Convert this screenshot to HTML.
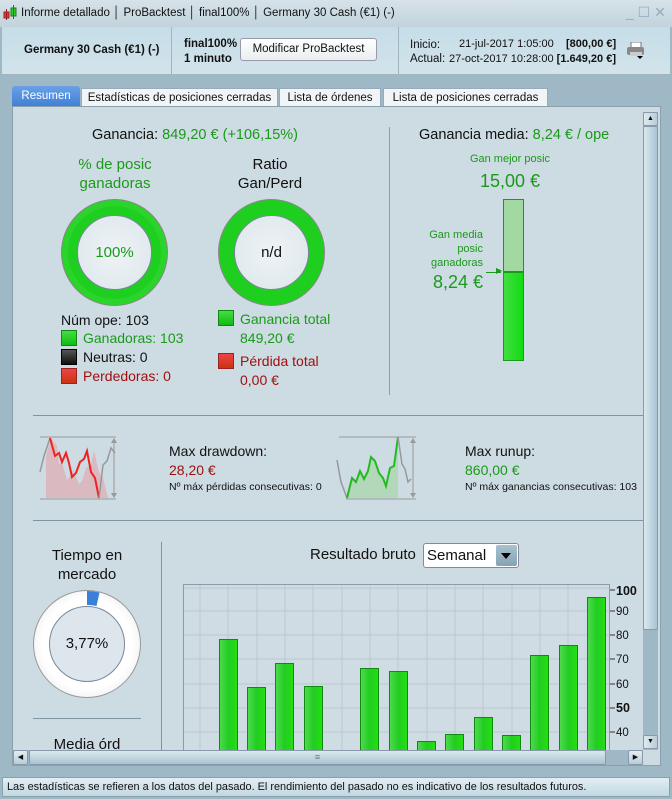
<!DOCTYPE html>
<html><head><meta charset="utf-8"><style>
*{margin:0;padding:0;box-sizing:border-box}
body{width:672px;height:799px;overflow:hidden;background:#9fb8c5;font-family:"Liberation Sans",Arial,sans-serif;position:relative;font-size:12px;color:#111}
.a{position:absolute;white-space:nowrap}
.g{color:#1a9a1a}.r{color:#a01010}
.c{text-align:center}
</style></head><body>
<div class="a" style="left:0;top:0;width:672px;height:27px;background:linear-gradient(#d6e2e8,#c2d3dc)"></div>
<svg class="a" style="left:3px;top:5px" width="14" height="16"><rect x="1" y="7" width="5" height="6" fill="#e33" stroke="#922"/><line x1="3.5" y1="4" x2="3.5" y2="15" stroke="#922"/><rect x="8" y="3" width="5" height="8" fill="#3c3" stroke="#272"/><line x1="10.5" y1="0" x2="10.5" y2="14" stroke="#272"/></svg>
<div class="a" style="left:21px;top:7px;font-size:11.5px">Informe detallado │ ProBacktest │ final100% │ Germany 30 Cash (€1) (-)</div>
<div class="a" style="left:626px;top:4px;font-size:14px;color:#9ab">_ ☐ ✕</div>
<div class="a" style="left:2px;top:27px;width:668px;height:48px;background:linear-gradient(#c5dde8,#d3e3ea);border-bottom:1px solid #9fb5c0"></div>
<div class="a" style="left:171px;top:27px;width:1px;height:48px;background:#9fb5c0"></div>
<div class="a" style="left:398px;top:27px;width:1px;height:48px;background:#9fb5c0"></div>
<div class="a" style="left:24px;top:44px;font-size:11.5px;font-weight:bold">Germany 30 Cash (€1) (-)</div>
<div class="a" style="left:184px;top:37px;font-size:11.5px;font-weight:bold;line-height:15px">final100%<br>1 minuto</div>
<div class="a c" style="left:240px;top:38px;width:137px;height:23px;border:1px solid #99a;border-radius:3px;background:linear-gradient(#fff,#eaeef0);font-size:11.5px;line-height:21px">Modificar ProBacktest</div>
<div class="a" style="left:410px;top:38px;font-size:11.5px;line-height:15px">Inicio:</div>
<div class="a" style="left:410px;top:53px;font-size:11.5px">Actual:</div>
<div class="a" style="left:459px;top:38px;font-size:11px">21-jul-2017 1:05:00</div>
<div class="a" style="left:449px;top:53px;font-size:11px">27-oct-2017 10:28:00</div>
<div class="a" style="left:566px;top:38px;width:50px;text-align:right;font-size:11px;font-weight:bold">[800,00 €]</div>
<div class="a" style="left:556px;top:53px;width:60px;text-align:right;font-size:11px;font-weight:bold">[1.649,20 €]</div>
<svg class="a" style="left:626px;top:42px" width="20" height="18"><rect x="5" y="0" width="10" height="6" fill="#fff" stroke="#777"/><rect x="1" y="5" width="17" height="8" rx="2" fill="#888"/><rect x="4" y="10" width="12" height="4" fill="#ccc"/><path d="M11 14h6l-3 3z" fill="#000"/></svg>
<div class="a c" style="left:12px;top:86px;width:68px;height:21px;background:linear-gradient(#6aa1e6,#3e7fd6);color:#fff;border-radius:3px 3px 0 0;font-size:11.5px;line-height:21px">Resumen</div>
<div class="a c" style="left:81px;top:88px;width:197px;height:19px;background:#f2f5f7;border:1px solid #9ab;font-size:11.5px;line-height:18px">Estadísticas de posiciones cerradas</div>
<div class="a c" style="left:279px;top:88px;width:102px;height:19px;background:#f2f5f7;border:1px solid #9ab;font-size:11.5px;line-height:18px">Lista de órdenes</div>
<div class="a c" style="left:383px;top:88px;width:165px;height:19px;background:#f2f5f7;border:1px solid #9ab;font-size:11.5px;line-height:18px">Lista de posiciones cerradas</div>
<div class="a" style="left:12px;top:106px;width:649px;height:660px;background:#cddbe2;border:1px solid #8aa0ac"></div>
<div class="a c" style="left:60px;top:127px;width:270px;font-size:14.5px">Ganancia: <span class="g">849,20 € (+106,15%)</span></div>
<div class="a c g" style="left:50px;top:155px;width:130px;font-size:15px;line-height:19px">% de posic<br>ganadoras</div>
<div class="a c" style="left:205px;top:155px;width:130px;font-size:15px;line-height:19px">Ratio<br>Gan/Perd</div>
<div class="a" style="left:61px;top:199px;width:107px;height:107px;border-radius:50%;background:#1fcf1f;border:1px solid #888;box-shadow:inset 0 0 0 6px #2bd42b"></div>
<div class="a c g" style="left:77px;top:215px;width:75px;height:75px;border-radius:50%;background:radial-gradient(#eef3f6,#dce6ec);border:1px solid #789;line-height:73px;font-size:15px">100%</div>
<div class="a" style="left:218px;top:199px;width:107px;height:107px;border-radius:50%;background:#1fcf1f;border:1px solid #888"></div>
<div class="a c" style="left:234px;top:215px;width:75px;height:75px;border-radius:50%;background:radial-gradient(#eef3f6,#dce6ec);border:1px solid #789;line-height:73px;font-size:15px">n/d</div>
<div class="a" style="left:61px;top:311px;font-size:14px;line-height:19px">Núm ope: 103</div>
<div class="a" style="left:61px;top:330px;width:16px;height:16px;background:linear-gradient(#4d4,#1b1);border:1px solid #181"></div>
<div class="a g" style="left:83px;top:330px;font-size:14px">Ganadoras: 103</div>
<div class="a" style="left:61px;top:349px;width:16px;height:16px;background:linear-gradient(#555,#111);border:1px solid #000"></div>
<div class="a" style="left:83px;top:349px;font-size:14px">Neutras: 0</div>
<div class="a" style="left:61px;top:368px;width:16px;height:16px;background:linear-gradient(#e44,#c31);border:1px solid #922"></div>
<div class="a r" style="left:83px;top:368px;font-size:14px">Perdedoras: 0</div>
<div class="a" style="left:218px;top:310px;width:16px;height:16px;background:linear-gradient(#4d4,#1b1);border:1px solid #181"></div>
<div class="a g" style="left:240px;top:310px;font-size:14px;line-height:19px">Ganancia total<br>849,20 €</div>
<div class="a" style="left:218px;top:353px;width:16px;height:16px;background:linear-gradient(#e44,#c31);border:1px solid #922"></div>
<div class="a r" style="left:240px;top:352px;font-size:14px;line-height:19px">Pérdida total<br>0,00 €</div>
<div class="a" style="left:389px;top:127px;width:1px;height:268px;background:#8aa0ac"></div>
<div class="a" style="left:419px;top:127px;font-size:14.5px">Ganancia media: <span class="g">8,24 € / ope</span></div>
<div class="a c g" style="left:450px;top:153px;width:120px;font-size:11px">Gan mejor posic</div>
<div class="a c g" style="left:450px;top:171px;width:120px;font-size:18px">15,00 €</div>
<div class="a" style="left:503px;top:199px;width:21px;height:73px;background:#a2d9a2;border:1px solid #1a9a1a"></div>
<div class="a" style="left:503px;top:272px;width:21px;height:89px;background:linear-gradient(90deg,#4d4,#1d1);border:1px solid #1a9a1a"></div>
<div class="a g" style="left:420px;top:228px;width:63px;text-align:right;font-size:11px;line-height:14px">Gan media<br>posic<br>ganadoras</div>
<div class="a g" style="left:420px;top:272px;width:63px;text-align:right;font-size:18px">8,24 €</div>
<div class="a" style="left:486px;top:272px;width:15px;height:1px;background:#1a9a1a"></div>
<div class="a g" style="left:496px;top:266px;font-size:8px">▶</div>
<div class="a" style="left:33px;top:415px;width:610px;height:1px;background:#7f96a2"></div>
<svg class="a" style="left:38px;top:434px" width="120" height="70">
<path d="M2 22L7 4L13 12L15 30L18 28L23 46L26 42L29 36L35 50L38 47L42 34L47 31L50 17L55 38L59 44L64 64L2 64Z" fill="#dcb6bc" opacity=".9" transform="translate(6,0)"/>
<path d="M12 4 L6 22 L2 38" stroke="#999" fill="none" stroke-width="1.5"/>
<polyline points="6,4 11,22 15,19 18,28 22,19 25,29 28,43 32,39 36,28 40,25 43,17 47,38 51,44 55,64" fill="none" stroke="#e22" stroke-width="2" transform="translate(6,0)"/>
<polyline points="61,64 65,31 69,27 73,14 77,19" fill="none" stroke="#999" stroke-width="1.5"/>
<line x1="2" y1="3" x2="78" y2="3" stroke="#999"/><line x1="2" y1="65" x2="78" y2="65" stroke="#999"/>
<line x1="76" y1="6" x2="76" y2="62" stroke="#999"/><path d="M73 9l3-5 3 5zM73 59l3 5 3-5z" fill="#999"/>
</svg>
<div class="a" style="left:169px;top:443px;font-size:14px">Max drawdown:</div>
<div class="a r" style="left:169px;top:462px;font-size:14px">28,20 €</div>
<div class="a" style="left:169px;top:481px;font-size:10.5px">Nº máx pérdidas consecutivas: 0</div>
<svg class="a" style="left:336px;top:434px" width="120" height="70">
<path d="M11 64L16 44L20 48L24 37L28 45L32 37L35 23L39 27L43 39L47 44L50 52L54 34L58 32L62 3L62 64Z" fill="#b3d7b9"/>
<polyline points="1,26 5,48 11,64" fill="none" stroke="#999" stroke-width="1.5"/>
<polyline points="11,64 16,44 20,48 24,37 28,45 32,37 35,23 39,27 43,39 47,44 50,52 54,34 58,32 62,3" fill="none" stroke="#2b2" stroke-width="2"/>
<polyline points="62,3 66,30 69,35 72,48 75,45" fill="none" stroke="#999" stroke-width="1.5"/>
<line x1="3" y1="3" x2="80" y2="3" stroke="#999"/><line x1="10" y1="65" x2="80" y2="65" stroke="#999"/>
<line x1="77" y1="6" x2="77" y2="62" stroke="#999"/><path d="M74 9l3-5 3 5zM74 59l3 5 3-5z" fill="#999"/>
</svg>
<div class="a" style="left:465px;top:443px;font-size:14px">Max runup:</div>
<div class="a g" style="left:465px;top:462px;font-size:14px">860,00 €</div>
<div class="a" style="left:465px;top:481px;font-size:10.5px;width:178px;overflow:hidden">Nº máx ganancias consecutivas: 103</div>
<div class="a" style="left:33px;top:520px;width:610px;height:1px;background:#7f96a2"></div>
<div class="a c" style="left:33px;top:546px;width:108px;font-size:15px;line-height:19px">Tiempo en<br>mercado</div>
<div class="a" style="left:33px;top:590px;width:108px;height:108px;border-radius:50%;background:radial-gradient(#fff 60%,#ddd);border:1px solid #999"></div>
<svg class="a" style="left:33px;top:590px" width="108" height="108"><path d="M54 1A53 53 0 0 1 66.5 2.5L63.5 16A38 38 0 0 0 54 15Z" fill="#3a7fd8"/></svg>
<div class="a c" style="left:49px;top:606px;width:76px;height:76px;border-radius:50%;background:#dde6ec;border:1px solid #789;line-height:74px;font-size:15px">3,77%</div>
<div class="a" style="left:33px;top:718px;width:108px;height:1px;background:#7f96a2"></div>
<div class="a c" style="left:33px;top:736px;width:108px;font-size:15px;height:14px;overflow:hidden">Media órd</div>
<div class="a" style="left:161px;top:542px;width:1px;height:208px;background:#7f96a2"></div>
<div class="a" style="left:310px;top:546px;font-size:15px">Resultado bruto</div>
<div class="a" style="left:423px;top:543px;width:96px;height:25px;background:#fff;border:1px solid #889;border-radius:3px;font-size:15px;line-height:23px;padding-left:3px">Semanal</div>
<div class="a" style="left:496px;top:545px;width:21px;height:21px;background:linear-gradient(#a8c2cf,#86a3b2);border-radius:2px"></div>
<svg class="a" style="left:500px;top:552px" width="12" height="8"><path d="M1 1h10l-5 6z" fill="#000"/></svg>
<svg class="a" style="left:183px;top:584px" width="460" height="166">
<rect x="0.5" y="0.5" width="426" height="170" fill="#cfdce3" stroke="#8a9ca6"/>
<g stroke="#bcc8cf" stroke-width="1">
<line x1="1" y1="27" x2="426" y2="27"/><line x1="1" y1="51" x2="426" y2="51"/><line x1="1" y1="75" x2="426" y2="75"/><line x1="1" y1="100" x2="426" y2="100"/><line x1="1" y1="124" x2="426" y2="124"/><line x1="1" y1="148" x2="426" y2="148"/><line x1="1" y1="4" x2="426" y2="4"/>
<line x1="17" y1="1" x2="17" y2="166"/><line x1="45" y1="1" x2="45" y2="166"/><line x1="74" y1="1" x2="74" y2="166"/><line x1="102" y1="1" x2="102" y2="166"/><line x1="130" y1="1" x2="130" y2="166"/><line x1="159" y1="1" x2="159" y2="166"/><line x1="187" y1="1" x2="187" y2="166"/><line x1="215" y1="1" x2="215" y2="166"/><line x1="244" y1="1" x2="244" y2="166"/><line x1="272" y1="1" x2="272" y2="166"/><line x1="300" y1="1" x2="300" y2="166"/><line x1="329" y1="1" x2="329" y2="166"/><line x1="357" y1="1" x2="357" y2="166"/><line x1="385" y1="1" x2="385" y2="166"/>
</g>
<defs><linearGradient id="b" x1="0" x2="1"><stop offset="0" stop-color="#4fdc4f"/><stop offset=".5" stop-color="#22cc22"/><stop offset="1" stop-color="#22e010"/></linearGradient></defs>
<g fill="url(#b)" stroke="#118811">
<rect x="36.5" y="55.5" width="18" height="120"/>
<rect x="64.5" y="103.5" width="18" height="80"/>
<rect x="92.5" y="79.5" width="18" height="100"/>
<rect x="121.5" y="102.5" width="18" height="80"/>
<rect x="177.5" y="84.5" width="18" height="100"/>
<rect x="206.5" y="87.5" width="18" height="100"/>
<rect x="234.5" y="157.5" width="18" height="30"/>
<rect x="262.5" y="150.5" width="18" height="30"/>
<rect x="291.5" y="133.5" width="18" height="50"/>
<rect x="319.5" y="151.5" width="18" height="30"/>
<rect x="347.5" y="71.5" width="18" height="110"/>
<rect x="376.5" y="61.5" width="18" height="110"/>
<rect x="404.5" y="13.5" width="18" height="160"/>
</g>
<g stroke="#333"><line x1="427" y1="6" x2="432" y2="6"/><line x1="427" y1="27" x2="432" y2="27"/><line x1="427" y1="51" x2="432" y2="51"/><line x1="427" y1="75" x2="432" y2="75"/><line x1="427" y1="100" x2="432" y2="100"/><line x1="427" y1="124" x2="432" y2="124"/><line x1="427" y1="148" x2="432" y2="148"/></g>
<g font-family="Liberation Sans" font-size="11.5" fill="#111"><text x="433" y="11" font-weight="bold" font-size="12.5">100</text><text x="433" y="31">90</text><text x="433" y="55">80</text><text x="433" y="79">70</text><text x="433" y="104">60</text><text x="433" y="128" font-weight="bold" font-size="12.5">50</text><text x="433" y="152">40</text></g>
</svg>
<div class="a" style="left:643px;top:112px;width:15px;height:638px;background:#9fb8c5"></div>
<div class="a" style="left:643px;top:112px;width:15px;height:14px;background:linear-gradient(90deg,#dfeaf0,#b8cdd8);border:1px solid #89a;border-radius:2px;font-size:7px;text-align:center;line-height:12px">▲</div>
<div class="a" style="left:643px;top:126px;width:15px;height:504px;background:linear-gradient(90deg,#dbe8ee,#a9c4d2);border:1px solid #89a;border-radius:2px"></div>
<div class="a" style="left:643px;top:735px;width:15px;height:14px;background:linear-gradient(90deg,#dfeaf0,#b8cdd8);border:1px solid #89a;border-radius:2px;font-size:7px;text-align:center;line-height:12px">▼</div>
<div class="a" style="left:13px;top:750px;width:630px;height:15px;background:#9fb8c5"></div>
<div class="a" style="left:13px;top:750px;width:15px;height:15px;background:linear-gradient(#e4eef2,#b8cdd8);border:1px solid #89a;border-radius:2px;font-size:7px;text-align:center;line-height:13px">◀</div>
<div class="a" style="left:29px;top:750px;width:577px;height:15px;background:linear-gradient(#dbe8ee,#a9c4d2);border:1px solid #89a;border-radius:2px;font-size:9px;text-align:center;line-height:13px;color:#678">≡</div>
<div class="a" style="left:628px;top:750px;width:15px;height:15px;background:linear-gradient(#e4eef2,#b8cdd8);border:1px solid #89a;border-radius:2px;font-size:7px;text-align:center;line-height:13px">▶</div>
<div class="a" style="left:2px;top:777px;width:668px;height:20px;background:linear-gradient(#e2eef3,#c2d8e2);border:1px solid #8aa0ac"></div>
<div class="a" style="left:7px;top:781px;font-size:10.9px">Las estadísticas se refieren a los datos del pasado. El rendimiento del pasado no es indicativo de los resultados futuros.</div>
</body></html>
